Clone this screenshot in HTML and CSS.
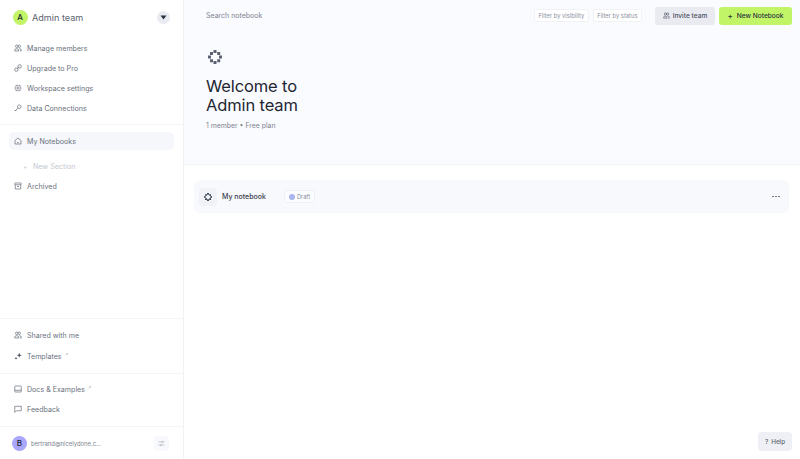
FILE: index.html
```html
<!DOCTYPE html>
<html lang="en">
<head>
	<meta charset="UTF-8">
	<meta name="viewport" content="width=device-width, initial-scale=1.0">
	<title>Admin team</title>
	<link rel="stylesheet" href="styles.css">
</head>
<body>
	<div class="app">
		<aside class="sidebar">
			<div class="team">
				<span class="team-avatar">A</span>
				<span class="team-name">Admin team</span>
				<span class="team-toggle"><svg width="7" height="5" viewBox="0 0 7 5"><path d="M0.5 0.5h6L3.5 4.5z" fill="#2a3140"/></svg></span>
			</div>
			<nav class="group group-top">
				<a class="item"><svg class="ico" viewBox="0 0 16 16"><circle cx="5.5" cy="4.500" r="2.500"/><circle cx="10.500" cy="4.500" r="2.500"/><path d="M1.500 14v-2c0-1.500 1.200-2.500 2.500-2.500h2.500c1.300 0 2.500 1 2.500 2.500v2zM10.500 9.500h1.500c1.300 0 2.500 1 2.500 2.500v2h-3"/></svg>Manage members</a>
				<a class="item"><svg class="ico" viewBox="0 0 16 16"><rect x="1.500" y="8" width="6.500" height="6.500" rx="2.500"/><rect x="8" y="1.500" width="6.500" height="6.500" rx="2.500"/><path d="M5.500 10.500l5-5"/></svg>Upgrade to Pro</a>
				<a class="item"><svg class="ico" viewBox="0 0 16 16"><circle cx="8" cy="8" r="2.200"/><path d="M8 1.500l1.700 1.700 2.500-.3.300 2.500L14.500 8l-2 2.600-.3 2.500-2.500-.3L8 14.500l-1.700-1.700-2.500.3-.3-2.500L1.500 8l2-2.600.3-2.500 2.500.3z"/></svg>Workspace settings</a>
				<a class="item"><svg class="ico" viewBox="0 0 16 16"><circle cx="10.500" cy="5.500" r="3.500"/><path d="M8 8L2 14M2 14v-2M3.500 12.500l1.500 1.500"/></svg>Data Connections</a>
			</nav>
			<nav class="group group-main">
				<a class="item item-active"><svg class="ico" viewBox="0 0 16 16"><path d="M2 7L8 2l6 5v7H2z"/><path d="M6 10.500c1 1 3 1 4 0"/></svg>My Notebooks</a>
				<a class="item item-new"><span class="new-plus">+</span>New Section</a>
				<a class="item"><svg class="ico" viewBox="0 0 16 16"><rect x="1.500" y="2" width="13" height="3.500" rx="1"/><path d="M2.500 5.500V14h11V5.500M6 9h4"/></svg>Archived</a>
			</nav>
			<nav class="group group-shared">
				<a class="item"><svg class="ico" viewBox="0 0 16 16"><circle cx="5.500" cy="4.500" r="2.500"/><circle cx="10.500" cy="4.500" r="2.500"/><path d="M1.500 14v-2c0-1.500 1.200-2.500 2.500-2.500h2.500c1.300 0 2.500 1 2.500 2.500v2zM10.500 9.500h1.500c1.300 0 2.500 1 2.500 2.500v2h-3"/></svg>Shared with me</a>
				<a class="item"><svg class="ico ico-solid" viewBox="0 0 16 16"><path d="M10.500 1.500l1.300 3.700L15.500 6.500l-3.700 1.300-1.300 3.700-1.300-3.700L5.500 6.500l3.700-1.300z"/><path d="M4 9.500l.9 2.100L7 12.500l-2.100.9L4 15.500l-.9-2.100L1 12.500l2.100-.9z"/></svg>Templates<svg class="ext" viewBox="0 0 4 4"><path d="M.5 3.500l3-3M1.300.5h2.200v2.200"/></svg></a>
			</nav>
			<nav class="group group-docs">
				<a class="item"><svg class="ico" viewBox="0 0 16 16"><rect x="1.500" y="2" width="13" height="12" rx="1.500"/><path d="M1.500 10.500h13"/></svg>Docs &amp; Examples<svg class="ext" viewBox="0 0 4 4"><path d="M.5 3.500l3-3M1.300.5h2.200v2.200"/></svg></a>
				<a class="item"><svg class="ico" viewBox="0 0 16 16"><path d="M1.500 2.500h13v9H5.500l-4 3z"/></svg>Feedback</a>
			</nav>
			<div class="account">
				<span class="account-avatar">B</span>
				<span class="account-mail">bertrand@nicelydone.c...</span>
				<span class="account-switch"><svg width="7" height="7" viewBox="0 0 9 9"><path d="M0.500 2.500h8M0.500 6.500h8M5.500 1v3M3.500 5v3" fill="none" stroke="#b4b9c3" stroke-width="1"/></svg></span>
			</div>
		</aside>
		<main class="content">
			<header class="hero">
				<div class="topbar">
					<span class="search">Search notebook</span>
					<span class="filter">Filter by visibility</span>
					<span class="filter">Filter by status</span>
					<button class="btn btn-invite"><svg class="btn-ico" viewBox="0 0 16 16"><circle cx="5.500" cy="4.500" r="2.500"/><circle cx="10.500" cy="4.500" r="2.500"/><path d="M1.500 14v-2c0-1.500 1.200-2.500 2.500-2.500h2.500c1.300 0 2.500 1 2.500 2.500v2zM10.500 9.500h1.500c1.300 0 2.500 1 2.500 2.500v2h-3"/></svg>Invite team</button>
					<button class="btn btn-new"><span class="btn-plus">+</span>New Notebook</button>
				</div>
				<svg class="hero-logo" width="14" height="14" viewBox="0 0 14 14" fill="#5a6170"><path d="M5.500 0h3v3h-3zM2 2h3v3H2zM9.200 2h3v3h-3zM0 5.500h3v3H0zM11 5.500h3v3h-3zM2 9.200h3v3H2zM9.200 9.200h3v3h-3zM5.500 11h3v3h-3z"/></svg>
				<h1 class="hero-title">Welcome to<br>Admin team</h1>
				<p class="hero-sub">1 member • Free plan</p>
			</header>
			<section class="list">
				<div class="row">
					<span class="row-icon"><svg width="8" height="8" viewBox="0 0 14 14" fill="#2a3140"><path d="M5.500 0h3v3h-3zM2 2h3v3H2zM9.200 2h3v3h-3zM0 5.500h3v3H0zM11 5.500h3v3h-3zM2 9.200h3v3H2zM9.200 9.200h3v3h-3zM5.500 11h3v3h-3z"/></svg></span>
					<span class="row-title">My notebook</span>
					<span class="badge"><span class="badge-dot"></span>Draft</span>
					<span class="row-more"><i></i><i></i><i></i></span>
				</div>
			</section>
			<button class="help"><span class="help-mark">?</span>Help</button>
		</main>
	</div>
</body>
</html>
```

FILE: styles.css
```css
* {padding: 0; margin: 0; box-sizing: border-box;}
html, body {width: 100%; height: 100%; overflow: hidden; background: #fff;}
body {font-family: "Inter", "Liberation Sans", sans-serif; color: #4f5663;}
button {font-family: inherit; border: 0;}
.app {display: flex; height: 459px;}

/* sidebar */
.sidebar {width: 184px; flex: none; display: flex; flex-direction: column; border-right: 1px solid #f1f2f6;}
.team {height: 34px; padding: 0 13px 0 12.500px; display: flex; align-items: center; flex: none;}
.team-avatar {width: 15px; height: 15px; border-radius: 50%; background: #c1f467; color: #1f2633; font-size: 8px; font-weight: 500; display: flex; align-items: center; justify-content: center;}
.team-name {margin-left: 4.500px; font-size: 9.100px; color: #5d6471;}
.team-toggle {margin-left: auto; width: 13px; height: 13px; border-radius: 50%; background: #e9ebf1; display: flex; align-items: center; justify-content: center;}
.group {display: flex; flex-direction: column; padding: 0 9px; flex: none;}
.group-top {padding-top: 4px; padding-bottom: 6px; border-bottom: 1px solid #f4f5f8;}
.group-main {padding-top: 8px; flex: 1;}
.group-shared {padding-top: 6px; padding-bottom: 7px; border-top: 1px solid #f4f5f8; gap: 1px;}
.group-docs {padding-top: 5px; padding-bottom: 7px; border-top: 1px solid #f4f5f8;}
.item {height: 20px; display: flex; align-items: center; padding-left: 4.500px; font-size: 7.100px; color: #6a717d;}
.item-active {height: 18px; background: #f6f7fb; border-radius: 5px; margin-bottom: 5px; margin-top: -1px;}
.item-new {color: #c3c7cf; padding-left: 14px; margin-top: 1px;}
.new-plus {width: 10px; font-size: 6px;}
.ico {width: 8px; height: 8px; margin-right: 5.500px; flex: none; fill: none; stroke: #666d79; stroke-width: 1.400;}
.ico-solid {fill: #4f5663; stroke: none;}
.ext {width: 3px; height: 3px; margin-left: 3px; margin-top: -4px; fill: none; stroke: #a3a9b3; stroke-width: .6;}
.account {flex: none; height: 33px; border-top: 1px solid #f4f5f8; padding: 0 14px 0 12px; display: flex; align-items: center;}
.account-avatar {width: 15px; height: 15px; border-radius: 50%; background: #a9a6fb; color: #22283a; font-size: 8px; font-weight: 500; display: flex; align-items: center; justify-content: center;}
.account-mail {margin-left: 4px; font-size: 5.900px; color: #7d8491;}
.account-switch {margin-left: auto; width: 15px; height: 15px; border-radius: 4px; background: #f8f9fc; display: flex; align-items: center; justify-content: center;}

/* main */
.content {flex: 1; position: relative; min-width: 0;}
.hero {height: 165px; background: #fafbfe; border-bottom: 1px solid #f1f2f6; padding: 6px 8px 0 22px;}
.topbar {display: flex; align-items: center; height: 19px;}
.search {font-size: 7px; color: #7d8491; margin-right: auto;}
.filter {height: 13px; padding: 0 3.500px; margin-right: 4px; font-size: 5.800px; line-height: 11px; color: #8b919d; background: #fff; border: 1px solid #f1f2f6; border-radius: 2px;}
.btn {height: 18px; border-radius: 3px; font-size: 6.600px; font-weight: 500; color: #2a3140; display: flex; align-items: center; justify-content: center;}
.btn-invite {width: 60px; margin-left: 9px; background: #e9ebf1; color: #4a5160;}
.btn-new {width: 73px; margin-left: 4px; background: #c1f467;}
.btn-plus {margin-right: 4px; font-weight: 500; font-size: 8px;}
.btn-ico {width: 7px; height: 7px; margin-right: 3px; fill: none; stroke: #4a5160; stroke-width: 1.400;}
.hero-logo {display: block; margin-top: 25px; margin-left: 2px;}
.hero-title {margin-top: 13px; font-size: 16.500px; line-height: 19px; font-weight: 400; letter-spacing: -0.13px; color: #1f2633;}
.hero-sub {margin-top: 6px; font-size: 6.900px; color: #7d8491;}

.list {padding: 15px 11px 0 10px;}
.row {height: 33px; background: #f8f9fd; border-radius: 6px; padding: 0 9px 0 5px; display: flex; align-items: center;}
.row-icon {width: 18px; height: 18px; border-radius: 4px; background: #f1f2f8; display: flex; align-items: center; justify-content: center;}
.row-title {margin-left: 5px; font-size: 7px; font-weight: 500; color: #3a414e;}
.badge {margin-left: 18px; height: 13px; padding: 0 4px; border: 1px solid #f0f1f6; border-radius: 3px; background: #fbfcff; display: flex; align-items: center; font-size: 5.700px; color: #8b919d;}
.badge-dot {width: 6px; height: 6px; border-radius: 50%; background: #a9b5f0; margin-right: 2px;}
.row-more {margin-left: auto; display: flex; gap: 1px;}
.row-more i {width: 2px; height: 1px; background: #777d88;}

.help {position: absolute; right: 8px; bottom: 8px; width: 34px; height: 19px; border-radius: 4px; background: #eef0f5; color: #5d6471; font-size: 6.300px; font-weight: 500; display: flex; align-items: center; justify-content: center;}
.help-mark {margin-right: 3px;}
```
